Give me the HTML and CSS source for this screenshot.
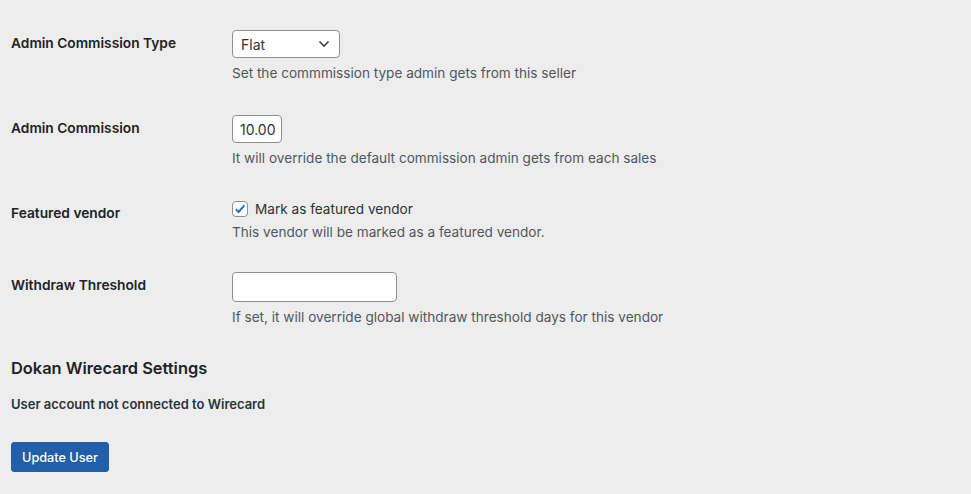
FILE: index.html
```html
<!DOCTYPE html>
<html>
<head>
<meta charset="utf-8">
<link rel="stylesheet" href="styles.css">
</head>
<body>
<div class="page">
  <div class="row r1">
    <div class="label">Admin Commission Type</div>
    <div class="field">
      <div class="select"><span>Flat</span>
        <svg class="chev" width="12" height="8" viewBox="0 0 12 8"><path d="M1.5 1.5 L6 6 L10.5 1.5" fill="none" stroke="#3c434a" stroke-width="1.6"/></svg>
      </div>
      <p class="desc">Set the commmission type admin gets from this seller</p>
    </div>
  </div>
  <div class="row r2">
    <div class="label">Admin Commission</div>
    <div class="field">
      <div class="input small">10.00</div>
      <p class="desc">It will override the default commission admin gets from each sales</p>
    </div>
  </div>
  <div class="row r3">
    <div class="label lbl-check">Featured vendor</div>
    <div class="field">
      <div class="check-line">
        <span class="checkbox"><svg width="14" height="14" viewBox="0 0 14 14"><path d="M2.8 7.2 L5.6 10 L11.4 3.4" fill="none" stroke="#2271b1" stroke-width="2"/></svg></span>
        <span class="check-text">Mark as featured vendor</span>
      </div>
      <p class="desc d3">This vendor will be marked as a featured vendor.</p>
    </div>
  </div>
  <div class="row r4">
    <div class="label">Withdraw Threshold</div>
    <div class="field">
      <div class="input wide"></div>
      <p class="desc">If set, it will override global withdraw threshold days for this vendor</p>
    </div>
  </div>
  <h2 class="heading">Dokan Wirecard Settings</h2>
  <p class="note">User account not connected to Wirecard</p>
  <button class="btn">Update User</button>
</div>
</body>
</html>
```
FILE: styles.css
```css
html, body {
  margin: 0;
  padding: 0;
  background: #ededed;
}
body {
  font-family: Inter, "Noto Sans", "Liberation Sans", sans-serif;
  color: #1d2327;
}
.page {
  padding: 30px 0 0 11px;
}
.row {
  display: flex;
}
.label {
  width: 221px;
  flex: none;
  font-size: 13.75px;
  font-weight: 600;
  line-height: 20px;
  padding-top: 3px;
  color: #1d2327;
}
.lbl-check {
  padding-top: 4px;
}
.field {
  display: flex;
  flex-direction: column;
  align-items: flex-start;
}
.r2 { margin-top: 33px; }
.r3 { margin-top: 32px; }
.r4 { margin-top: 31px; }
.select {
  width: 108px;
  height: 28px;
  box-sizing: border-box;
  border: 1px solid #8c8f94;
  border-radius: 4px;
  background: #fff;
  display: flex;
  align-items: center;
  justify-content: space-between;
  padding: 0 9px 0 8px;
  font-size: 14px;
  color: #2c3338;
}
.input {
  height: 29px;
  box-sizing: border-box;
  border: 1px solid #8c8f94;
  border-radius: 4px;
  background: #fff;
  font-size: 14px;
  color: #2c3338;
  display: flex;
  align-items: center;
  padding: 0 7px;
}
.input.small { width: 50px; height: 28px; }
.input.wide { width: 165px; height: 30px; }
.desc {
  margin: 6px 0 0;
  font-size: 13.6px;
  line-height: 18px;
  color: #50575e;
}
.d3 { margin-top: 4px; }
.check-line {
  display: flex;
  align-items: center;
  height: 20px;
}
.checkbox {
  width: 16px;
  height: 16px;
  box-sizing: border-box;
  border: 1px solid #8c8f94;
  border-radius: 4px;
  background: #fff;
  display: flex;
  align-items: center;
  justify-content: center;
  margin-right: 7px;
}
.check-text {
  font-size: 13.6px;
  color: #2c3338;
}
.heading {
  margin: 30px 0 0;
  font-size: 16.4px;
  font-weight: 600;
  line-height: 24px;
  color: #1d2327;
}
.note {
  margin: 15px 0 0;
  font-size: 13px;
  font-weight: 600;
  line-height: 18px;
  color: #2c3338;
}
.btn {
  margin-top: 29px;
  height: 30px;
  padding: 0 10px;
  border: 1px solid #2160a8;
  border-radius: 3px;
  background: #2160a8;
  color: #fff;
  font-family: inherit;
  font-size: 12.7px;
  font-weight: 500;
}
```
